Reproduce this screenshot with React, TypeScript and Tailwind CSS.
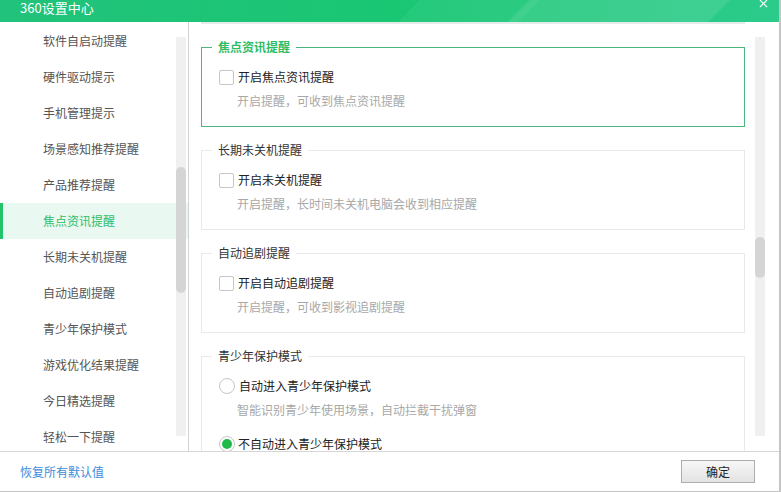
import { X } from 'lucide-react';

const navItems = [
  '软件自启动提醒',
  '硬件驱动提示',
  '手机管理提示',
  '场景感知推荐提醒',
  '产品推荐提醒',
  '焦点资讯提醒',
  '长期未关机提醒',
  '自动追剧提醒',
  '青少年保护模式',
  '游戏优化结果提醒',
  '今日精选提醒',
  '轻松一下提醒',
];

const activeItem = '焦点资讯提醒';

function Checkbox() {
  return <span className="h-[15px] w-[15px] shrink-0 rounded-[2px] border border-[#c6c6c6] bg-white" />;
}

function Radio({ checked }: { checked?: boolean }) {
  return (
    <span className="flex h-[16px] w-[16px] shrink-0 items-center justify-center rounded-full border border-[#c6c6c6] bg-white">
      {checked ? <span className="h-[10px] w-[10px] rounded-full bg-[#21b94a]" /> : null}
    </span>
  );
}

function GroupBox({
  title,
  active,
  tall,
  children,
}: {
  title: string;
  active?: boolean;
  tall?: boolean;
  children: React.ReactNode;
}) {
  return (
    <div
      className={`relative ml-[12px] w-[544px] shrink-0 border ${tall ? 'h-[130px]' : 'h-[80px]'} ${
        active ? 'border-[#4fb57f]' : 'border-[#e9e9e9]'
      }`}
    >
      <span
        className={`absolute -top-[9px] left-[10px] bg-white px-[6px] text-[12px] leading-[16px] ${
          active ? 'font-bold text-[#2cbd67]' : 'text-[#333]'
        }`}
      >
        {title}
      </span>
      {children}
    </div>
  );
}

function CheckRow({ label, desc }: { label: string; desc: string }) {
  return (
    <div className="flex flex-col pl-[17px] pt-[21px]">
      <div className="flex items-center gap-[4px]">
        <Checkbox />
        <span className="text-[12px] leading-[16px] text-[#222]">{label}</span>
      </div>
      <span className="mt-[8px] pl-[18px] text-[12px] leading-[16px] text-[#a8a8a8]">{desc}</span>
    </div>
  );
}

export default function App() {
  return (
    <div className="flex h-[492px] w-[781px] flex-col overflow-hidden border-r-2 border-b border-[#c4c4c4] bg-white font-['Noto_Sans_CJK_SC',sans-serif]">
      {/* title bar */}
      <div className="relative flex h-[22px] shrink-0 items-start justify-between overflow-hidden bg-gradient-to-r from-[#21c27b] via-[#19c672] to-[#2ccb8c] pl-[20px] pr-[9px]">
        <div className="absolute right-[60px] top-0 h-[22px] w-[200px] -skew-x-[45deg] bg-white/10" />
        <div className="absolute right-[250px] top-0 h-[22px] w-[120px] -skew-x-[45deg] bg-white/5" />
        <span className="relative text-[13px] leading-[15px] text-white">360设置中心</span>
        <X className="relative -mt-[3px] h-[13px] w-[13px] text-white" strokeWidth={2} />
      </div>

      <div className="flex min-h-0 flex-1">
        {/* sidebar */}
        <div className="relative w-[189px] shrink-0 border-r border-[#d2d2d2] pt-[1px]">
          {navItems.map((item) => {
            const on = item === activeItem;
            return (
              <div
                key={item}
                className={`flex h-[36px] items-center border-l-[3px] pl-[40px] text-[12px] ${
                  on ? 'border-[#22c36d] bg-[#e9f8f0] text-[#2fbd6b]' : 'border-transparent text-[#555]'
                }`}
              >
                {item}
              </div>
            );
          })}
          <div className="absolute left-[176px] top-[15px] h-[399px] w-[10px] bg-[#f0f0f0]">
            <div className="mt-[130px] h-[126px] w-[10px] rounded-full bg-[#d5d5d5]" />
          </div>
        </div>

        {/* content */}
        <div className="relative flex min-w-0 flex-1 flex-col gap-[23px] overflow-hidden">
          <div className="ml-[12px] h-[2px] w-[544px] shrink-0 bg-[#e4ebea]" />
          <GroupBox title="焦点资讯提醒" active>
            <CheckRow label="开启焦点资讯提醒" desc="开启提醒，可收到焦点资讯提醒" />
          </GroupBox>
          <GroupBox title="长期未关机提醒">
            <CheckRow label="开启未关机提醒" desc="开启提醒，长时间未关机电脑会收到相应提醒" />
          </GroupBox>
          <GroupBox title="自动追剧提醒">
            <CheckRow label="开启自动追剧提醒" desc="开启提醒，可收到影视追剧提醒" />
          </GroupBox>
          <GroupBox title="青少年保护模式" tall>
            <div className="flex flex-col pl-[17px] pt-[21px]">
              <div className="flex items-center gap-[4px]">
                <Radio />
                <span className="text-[12px] leading-[16px] text-[#222]">自动进入青少年保护模式</span>
              </div>
              <span className="mt-[8px] pl-[18px] text-[12px] leading-[16px] text-[#a8a8a8]">
                智能识别青少年使用场景，自动拦截干扰弹窗
              </span>
              <div className="mt-[18px] flex items-center gap-[3px]">
                <Radio checked />
                <span className="text-[12px] leading-[16px] text-[#222]">不自动进入青少年保护模式</span>
              </div>
            </div>
          </GroupBox>
          <div className="absolute left-[566px] top-[15px] h-[399px] w-[10px] bg-[#f0f0f0]">
            <div className="mt-[200px] h-[41px] w-[10px] rounded-full bg-[#d5d5d5]" />
          </div>
        </div>
      </div>

      {/* footer */}
      <div className="flex h-[40px] shrink-0 items-center justify-between border-t border-[#d6d6d6] pl-[20px] pr-[24px]">
        <span className="text-[12px] text-[#3a8ddb]">恢复所有默认值</span>
        <button className="h-[23px] w-[74px] border border-[#adadad] bg-gradient-to-b from-[#f7f7f7] to-[#e3e3e3] text-[12px] text-[#222]">
          确定
        </button>
      </div>
    </div>
  );
}
